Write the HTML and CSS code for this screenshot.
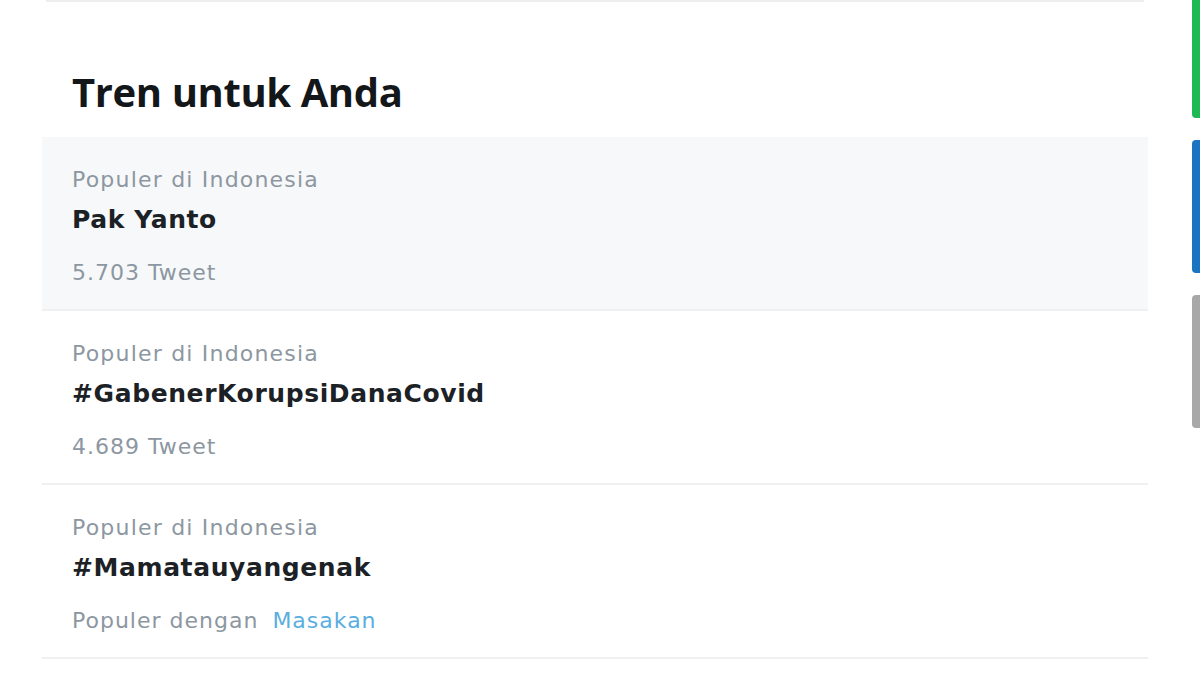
FILE: index.html
```html
<!DOCTYPE html>
<html lang="id">
<head>
<meta charset="utf-8">
<link rel="stylesheet" href="styles.css">
</head>
<body>
<div class="page">
  <div class="main">
    <div class="prev-edge"></div>
    <section class="trends">
      <h2 class="title">Tren untuk Anda</h2>
      <div class="trend hover">
        <div class="meta">Populer di Indonesia</div>
        <div class="name">Pak Yanto</div>
        <div class="count">5.703 Tweet</div>
      </div>
      <div class="trend">
        <div class="meta">Populer di Indonesia</div>
        <div class="name">#GabenerKorupsiDanaCovid</div>
        <div class="count">4.689 Tweet</div>
      </div>
      <div class="trend">
        <div class="meta">Populer di Indonesia</div>
        <div class="name">#Mamatauyangenak</div>
        <div class="count">Populer dengan <span class="link">Masakan</span></div>
      </div>
    </section>
  </div>
  <div class="rail">
    <div class="bar green"></div>
    <div class="bar blue"></div>
    <div class="bar gray"></div>
  </div>
</div>
</body>
</html>
```
FILE: styles.css
```css
html, body {
  margin: 0;
  padding: 0;
  background: #ffffff;
}
body {
  width: 1200px;
  height: 675px;
  overflow: hidden;
  font-family: "DejaVu Sans", "Open Sans", sans-serif;
}
.page {
  display: flex;
  align-items: flex-start;
}
.main {
  width: 1106px;
  margin-left: 42px;
}
.prev-edge {
  height: 2px;
  margin: 0 4px;
  background: #eceef0;
}
.trends {
  display: flex;
  flex-direction: column;
}
.title {
  margin: 0;
  height: 135px;
  box-sizing: border-box;
  padding: 64px 0 0 30px;
  font-family: "Open Sans", "Noto Sans", sans-serif;
  font-size: 40px;
  line-height: 52px;
  font-weight: 700;
  color: #14171a;
  letter-spacing: -0.4px;
}
.trend {
  height: 174px;
  box-sizing: border-box;
  padding: 28px 30px 0 30px;
  border-bottom: 2px solid #eef0f2;
}
.trend.hover {
  background: #f7f8f9;
}
.meta {
  font-size: 22px;
  line-height: 30px;
  letter-spacing: 1.2px;
  color: #8c97a1;
}
.name {
  font-size: 25px;
  line-height: 34px;
  font-weight: 700;
  letter-spacing: 0.6px;
  color: #1c2126;
  margin-top: 8px;
}
.count {
  font-size: 22px;
  line-height: 30px;
  letter-spacing: 1px;
  color: #8c97a1;
  margin-top: 21px;
}
.link {
  color: #5aaedf;
  margin-left: 6px;
}
.rail {
  margin-left: 44px;
  display: flex;
  flex-direction: column;
  gap: 22px;
}
.bar {
  width: 8px;
  height: 133px;
  border-radius: 4px 0 0 4px;
}
.bar.green {
  height: 118px;
  background: #1db954;
  border-radius: 0 0 0 4px;
}
.bar.blue {
  background: #1a74c2;
}
.bar.gray {
  background: #a8a8a8;
}
```
